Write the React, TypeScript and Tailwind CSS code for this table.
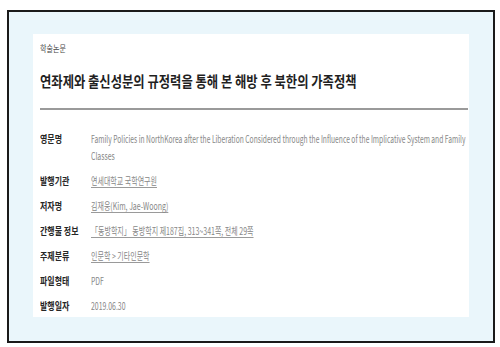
import React from "react";

const font = { fontFamily: '"Noto Sans CJK KR", "Noto Sans", sans-serif' };

function Label({ children }: { children: React.ReactNode }) {
  return (
    <div className="w-[51px] shrink-0">
      <span className="block w-max origin-left scale-x-[0.76] whitespace-nowrap text-[10.5px] font-bold text-[#262626]">
        {children}
      </span>
    </div>
  );
}

function Value({ children, link = false }: { children: React.ReactNode; link?: boolean }) {
  return (
    <span
      className={
        link
          ? "block w-max origin-left scale-x-[0.7] whitespace-nowrap text-[#878787] underline underline-offset-2 decoration-[#9a9a9a]"
          : "block w-max origin-left scale-x-[0.69] whitespace-nowrap text-[#878787]"
      }
    >
      {children}
    </span>
  );
}

function Row({ label, children }: { label: string; children: React.ReactNode }) {
  return (
    <div className="flex py-[4px] text-[10px] leading-[17px]">
      <Label>{label}</Label>
      <div className="flex min-w-0 flex-col">{children}</div>
    </div>
  );
}

export default function App() {
  return (
    <div className="h-[347px] w-[500px] overflow-hidden bg-white pl-[7px] pt-[10px]" style={font}>
      <div className="h-[333px] w-[488px] border-2 border-[#1a1a1a] bg-[#eaf6fb] pl-[24px] pt-[22px]">
        <div className="h-[283px] w-[436px] overflow-hidden bg-white pl-[7px] pt-[8px]">
          <div className="text-[9px] leading-[14px]">
            <span className="block w-max origin-left scale-x-[0.78] whitespace-nowrap text-[#444]">
              학술논문
            </span>
          </div>
          <div className="mt-[13px] text-[15px] leading-[24px]">
            <span className="block w-max origin-left scale-x-[0.82] whitespace-nowrap font-bold text-[#1f1f1f]">
              연좌제와 출신성분의 규정력을 통해 본 해방 후 북한의 가족정책
            </span>
          </div>
          <div className="mt-[15px] h-[2px] w-[428px] bg-[#9a9a9a]" />
          <div className="mt-[16px] flex flex-col">
            <Row label="영문명">
              <span className="block w-max origin-left scale-x-[0.67] whitespace-nowrap text-[#878787]">
                Family Policies in NorthKorea after the Liberation Considered through the Influence of the Implicative System and Family
              </span>
              <Value>Classes</Value>
            </Row>
            <Row label="발행기관">
              <Value link>연세대학교 국학연구원</Value>
            </Row>
            <Row label="저자명">
              <Value link>김재웅(Kim, Jae-Woong)</Value>
            </Row>
            <Row label="간행물 정보">
              <Value link>「동방학지」 동방학지 제187집, 313~341쪽, 전체 29쪽</Value>
            </Row>
            <Row label="주제분류">
              <Value link>인문학 &gt; 기타인문학</Value>
            </Row>
            <Row label="파일형태">
              <Value>PDF</Value>
            </Row>
            <Row label="발행일자">
              <Value>2019.06.30</Value>
            </Row>
          </div>
        </div>
      </div>
    </div>
  );
}
